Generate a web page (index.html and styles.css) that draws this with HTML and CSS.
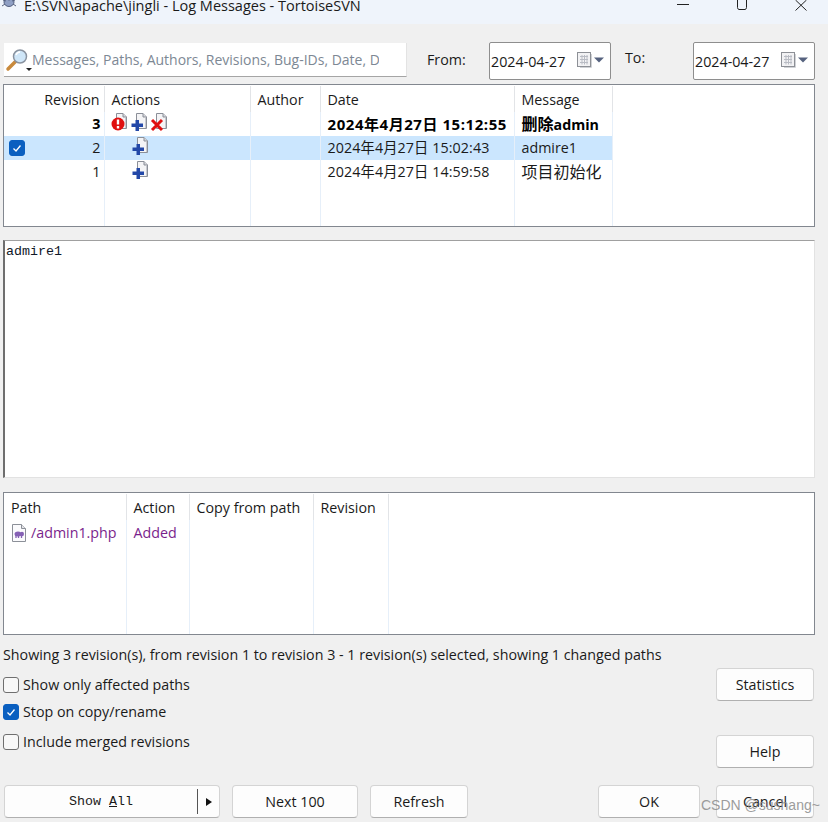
FILE: index.html
```html
<!DOCTYPE html>
<html lang="en">
<head>
<meta charset="utf-8">
<title>Log Messages - TortoiseSVN</title>
<link rel="stylesheet" href="styles.css">
</head>
<body>
<svg class="defs" width="0" height="0">
  <defs>
    <g id="doc"><path d="M5.5 .5H12L15.500 4V15.500H5.5Z" fill="#f4f4f6" stroke="#8b8f98"/><path d="M12 .5V4H15.500" fill="#d5d7dc" stroke="#8b8f98"/><path d="M14.500 5V15" stroke="#c8cad0"/></g>
    <g id="plus"><use href="#doc"/><path d="M4.500 7H8V10.500H12V14H8V18H4.500V14H.5V10.500H4.500Z" fill="#2348a8"/></g>
    <g id="cal"><rect x=".5" y=".5" width="13" height="14" fill="#f2f2f4" stroke="#8d9096"/><path d="M3 4.500H11M3 7.500H11M3 10.500H11M5 3V12.500M7.500 3V12.500M10 3V12.500" stroke="#b9bcc4"/><path d="M14.500 2V15.500H3" fill="none" stroke="#d0d2d6"/><path d="M17 5.500H27L22 10.500Z" fill="#56627f"/></g>
    <path id="tick" d="M3.500 7.500 6 10 10.500 4.500" fill="none" stroke="#fff" stroke-width="1.300"/>
  </defs>
</svg>
<div class="titlebar">
  <svg class="app-icon" width="18" height="14" viewBox="0 0 18 14"><ellipse cx="8" cy="5" rx="5" ry="4.500" fill="#8f9fc4" stroke="#55607f"/><path d="M1 9 4 7M15 9 12 7M2 3 5 4M14 3 11 4" stroke="#55607f"/><circle cx="8" cy="1" r="2" fill="#d8dce8" stroke="#55607f"/></svg>
  <span class="title-text">E:\SVN\apache\jingli - Log Messages - TortoiseSVN</span>
  <div class="win-controls">
    <svg width="14" height="12" viewBox="0 0 14 12"><path d="M1 4.500H13" stroke="#222"/></svg>
    <svg width="14" height="12" viewBox="0 0 14 12"><path d="M2.500 0V7.500A2 2 0 0 0 4 9.500H10A2 2 0 0 0 11.500 7.500V0" fill="none" stroke="#222"/></svg>
    <svg width="14" height="12" viewBox="0 0 14 12"><path d="M1.500 0 12.500 10.500M12.500 0 1.500 10.500" stroke="#222"/></svg>
  </div>
</div>
<main class="dialog">
  <div class="filter-row">
    <div class="search">
      <svg class="search-icon" width="24" height="24" viewBox="0 0 24 24"><path d="M2 21 10 13" stroke="#c98a3c" stroke-width="3.500" stroke-linecap="round"/><circle cx="14" cy="8.500" r="6.500" fill="#cfe6f8" stroke="#8a93a0" stroke-width="1.500"/><path d="M10 7A4.500 4.500 0 0 1 14 4" fill="none" stroke="#fff" stroke-width="1.500"/><path d="M20 20H26L23 23Z" fill="#222"/></svg>
      <span class="search-hint">Messages, Paths, Authors, Revisions, Bug-IDs, Date, D</span>
    </div>
    <label class="from-label">From:</label>
    <div class="date-box"><span>2024-04-27</span><svg width="28" height="16" viewBox="0 0 28 16"><use href="#cal"/></svg></div>
    <label class="to-label">To:</label>
    <div class="date-box"><span>2024-04-27</span><svg width="28" height="16" viewBox="0 0 28 16"><use href="#cal"/></svg></div>
  </div>

  <div class="list log-list">
    <table>
      <colgroup><col class="c-rev"><col class="c-act"><col class="c-auth"><col class="c-date"><col class="c-msg"><col></colgroup>
      <thead><tr><th class="num">Revision</th><th>Actions</th><th>Author</th><th>Date</th><th>Message</th><th class="blank"></th></tr></thead>
      <tbody>
        <tr class="strong">
          <td class="num">3</td>
          <td class="icons">
            <svg width="60" height="20" viewBox="0 0 60 20">
              <use href="#doc"/>
              <circle cx="7" cy="11" r="6.500" fill="#e01010"/><path d="M7 6.500V11.500" stroke="#fff" stroke-width="2.400"/><path d="M7 13V15.500" stroke="#fff" stroke-width="2.400"/>
              <use href="#plus" x="20"/>
              <use href="#doc" x="40"/>
              <path d="M41 7 51 17M51 7 41 17" stroke="#e01010" stroke-width="3"/>
            </svg>
          </td>
          <td></td><td class="date">2024年4月27日 15:12:55</td><td><span class="cjk">删除</span>admin</td><td class="blank"></td>
        </tr>
        <tr class="selected">
          <td class="num"><span class="check on sel-check"><svg width="14" height="14" viewBox="0 0 14 14"><use href="#tick"/></svg></span>2</td>
          <td class="icons"><svg class="indent" width="20" height="20" viewBox="0 0 20 20"><use href="#plus"/></svg></td>
          <td></td><td class="date">2024年4月27日 15:02:43</td><td>admire1</td><td class="blank"></td>
        </tr>
        <tr>
          <td class="num">1</td>
          <td class="icons"><svg class="indent" width="20" height="20" viewBox="0 0 20 20"><use href="#plus"/></svg></td>
          <td></td><td class="date">2024年4月27日 14:59:58</td><td><span class="cjk">项目初始化</span></td><td class="blank"></td>
        </tr>
        <tr class="filler"><td></td><td></td><td></td><td></td><td></td><td class="blank"></td></tr>
      </tbody>
    </table>
  </div>

  <div class="message">admire1</div>

  <div class="list path-list">
    <table>
      <colgroup><col class="c-path"><col class="c-action"><col class="c-copy"><col class="c-prev"><col></colgroup>
      <thead><tr><th>Path</th><th>Action</th><th>Copy from path</th><th>Revision</th><th class="blank"></th></tr></thead>
      <tbody>
        <tr class="added">
          <td><span class="path-cell"><svg width="14" height="18" viewBox="0 0 14 18"><path d="M.5 .5H9.500L13.500 4.500V17.500H.5Z" fill="#fbfbfd" stroke="#8c9098"/><path d="M9.500 .5V4.500H13.500" fill="#e4e4e8" stroke="#8c9098"/><ellipse cx="6" cy="10" rx="3.500" ry="2.500" fill="#8560b4"/><ellipse cx="10" cy="10" rx="2" ry="2.200" fill="#8560b4"/><path d="M4 11V14M6.500 11V14M9.500 11V14" stroke="#8560b4" stroke-width="1.300"/></svg>/admin1.php</span></td>
          <td>Added</td><td></td><td></td><td class="blank"></td>
        </tr>
        <tr class="filler"><td></td><td></td><td></td><td></td><td class="blank"></td></tr>
      </tbody>
    </table>
  </div>

  <p class="status">Showing 3 revision(s), from revision 1 to revision 3 - 1 revision(s) selected, showing 1 changed paths</p>

  <div class="options">
    <div class="checks">
      <div class="check-row"><span class="check"></span>Show only affected paths</div>
      <div class="check-row"><span class="check on"><svg width="14" height="14" viewBox="0 0 14 14"><use href="#tick"/></svg></span>Stop on copy/rename</div>
      <div class="check-row"><span class="check"></span>Include merged revisions</div>
    </div>
    <div class="side-buttons">
      <button class="btn side">Statistics</button>
      <button class="btn side">Help</button>
    </div>
  </div>

  <div class="actions">
    <div class="btn split"><span class="split-label">Show <u>A</u>ll</span><span class="split-arrow"></span></div>
    <button class="btn next">Next 100</button>
    <button class="btn refresh">Refresh</button>
    <button class="btn ok">OK</button>
    <button class="btn side">Cancel</button>
  </div>
</main>
<div class="watermark">CSDN @sushang~</div>
</body>
</html>
```
FILE: styles.css
```css
* { box-sizing: border-box; }
html, body { margin: 0; height: 100%; }
body {
  width: 828px; height: 822px; overflow: hidden; position: relative;
  background: #f0f0f0; color: #1a1a1a;
  font: 14.27px/20px "Open Sans", "Noto Sans CJK SC", sans-serif;
}
.defs { position: absolute; }
.titlebar {
  height: 24px; background: #eff4fb; display: flex; align-items: flex-start;
  overflow: hidden; padding-left: 1px;
}
.app-icon { margin-top: -3px; margin-right: 5px; flex: none; }
.title-text { margin-top: -4px; font-size: 14.5px; }
.win-controls { margin-left: auto; display: flex; gap: 45px; padding-right: 20px; }
.dialog { padding: 18px 13px 0 3px; }
.filter-row { display: flex; align-items: flex-start; height: 42px; }
.search {
  width: 403px; height: 34px; margin: 1px 0 0 1px; background: #fff;
  border-bottom: 1px solid #a5a5a5; border-right: 1px solid #e3e3e3;
  display: flex; align-items: center; padding-left: 2px; overflow: hidden;
}
.search-icon { flex: none; margin-right: 2px; overflow: visible; }
.search-hint { color: #7d8894; font-size: 14px; white-space: nowrap; width: 347px; overflow: hidden; }
.from-label { margin: 8px 0 0 20px; width: 62px; }
.to-label { margin: 6px 0 0 14px; width: 68px; }
.date-box {
  width: 122px; height: 38px; background: #fff; border: 1px solid #8e8e8e; border-radius: 2px;
  display: flex; align-items: center; justify-content: space-between; padding: 2px 5px 0 1px;
}
.date-box svg { margin-top: -4px; }
.list { background: #fff; border: 1px solid #82878f; padding-top: 1px; }
.list table { width: 100%; height: 100%; border-collapse: collapse; table-layout: fixed; }
.log-list { height: 143px; }
.path-list { height: 143px; }
.c-rev { width: 100px; } .c-act { width: 146px; } .c-auth { width: 70px; } .c-date { width: 194px; } .c-msg { width: 98px; }
.c-path { width: 122px; } .c-action { width: 63px; } .c-copy { width: 124px; } .c-prev { width: 75px; }
th, td { padding: 0 6px 0 7px; text-align: left; border-right: 1px solid #e6eff9; white-space: nowrap; font-weight: normal; overflow: hidden; }
th { height: 26px; border-right-color: #e2e4e7; padding-top: 2px; }
th.blank, td.blank { border-right: 0; }
td { height: 24px; }
.log-list .num { text-align: right; padding-right: 3px; position: relative; }
.log-list th.num { padding-right: 4px; }
.date { letter-spacing: .1px; }
.cjk { font-size: 16px; }
.strong td { font-weight: 700; color: #000; }
.strong .date { font-size: 15px; letter-spacing: .55px; }
.selected td { background: #cbe6fe; }
.selected td.blank { background: #fff; }
.filler td { height: auto; }
td.icons { padding: 1px 0 0 6px; line-height: 0; vertical-align: top; }
.indent { margin-left: 21px; }
.message {
  height: 238px; margin-top: 13px; background: #fff; padding: 2px 1px;
  border: 1px solid #e2e2e2; border-left: 2px solid #6e6e6e; border-top-color: #a0a0a0;
  color: #101828;
  font: 13.34px/18px "Liberation Mono", monospace;
}
.path-list { margin-top: 14px; }
.added td { color: #7a1f8c; height: 26px; }
.path-cell { display: flex; align-items: center; gap: 5px; margin-left: 1px; margin-right: -6px; }
.status { margin: 10px 0 0; white-space: nowrap; }
.options { display: flex; justify-content: space-between; }
.checks { padding-top: 10px; }
.check-row { display: flex; align-items: center; gap: 4px; height: 20px; margin-bottom: 10px; }
.check-row:first-child { margin-bottom: 7px; }
.check {
  width: 16px; height: 16px; flex: none; background: #f8f8f8; border: 1px solid #6f6f6f; border-radius: 3px;
  display: inline-flex;
}
.check.on { background: #0a5fc0; border-color: #0a5fc0; }
.sel-check { position: absolute; left: 5px; top: 4px; }
.side-buttons { display: flex; flex-direction: column; gap: 34px; margin: 3px 1px 0 0; }
.btn {
  height: 33px; background: #fdfdfd; border: 1px solid #d4d4d4; border-bottom-color: #b0b0b0; border-radius: 4px;
  font: inherit; color: #1a1a1a; padding: 0;
}
.side { width: 98px; }
.actions { display: flex; margin: 17px 0 0 1px; }
.split { width: 216px; display: flex; align-items: center; }
.split-label { width: 193px; text-align: center; font: 13.34px "Liberation Mono", monospace; border-right: 1px solid #555; line-height: 25px; }
.split-arrow { margin-left: 8px; border-left: 6px solid #111; border-top: 4.500px solid transparent; border-bottom: 4.500px solid transparent; }
.next { width: 126px; margin-left: 12px; }
.refresh { width: 98px; margin-left: 12px; }
.ok { width: 102px; margin-left: 130px; }
.actions .side { margin-left: 16px; }
.watermark {
  position: absolute; left: 701px; top: 795px; color: #8c8c8c; opacity: .85;
  font: 14px/20px "Liberation Sans", sans-serif; white-space: nowrap;
}
```
